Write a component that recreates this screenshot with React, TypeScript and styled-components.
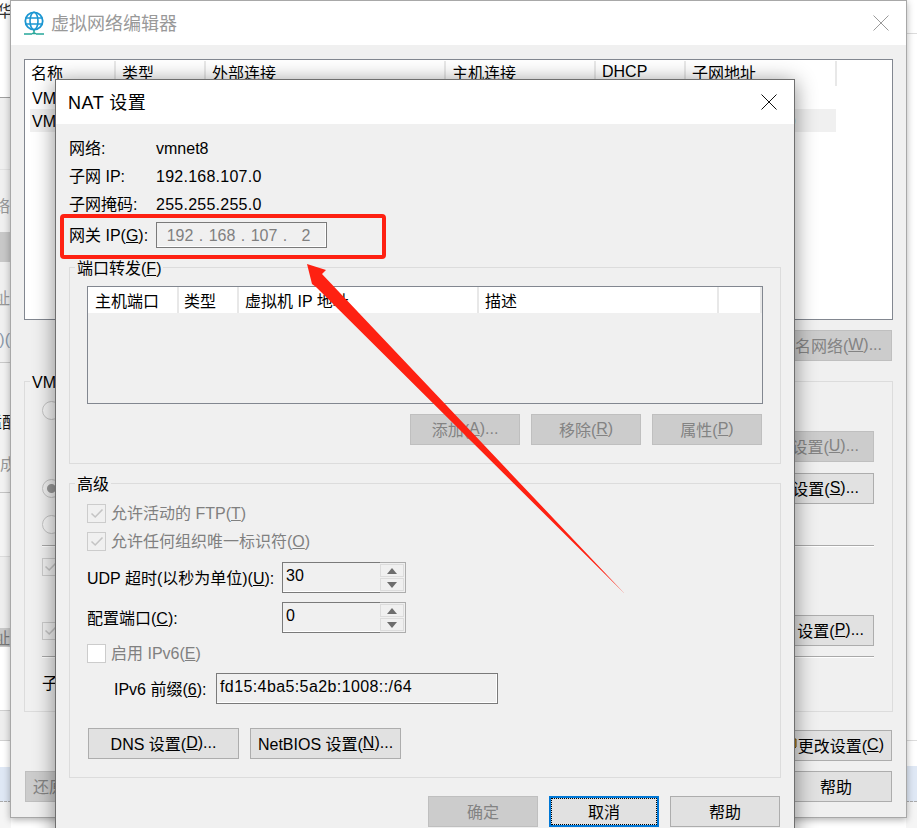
import React from "react";
import styled, { createGlobalStyle } from "styled-components";

const GlobalStyle = createGlobalStyle`
  html, body {
    margin: 0;
    height: 100%;
    overflow: hidden;
    background: #fff;
  }
  * { box-sizing: border-box; }
  body {
    font-family: "Liberation Sans", "Noto Sans CJK SC", sans-serif;
    font-size: 16px;
    color: #000;
  }
`;

const Desktop = styled.div`
  position: relative;
  width: 917px;
  height: 828px;
  overflow: hidden;
  display: flex;
  justify-content: space-between;
`;

const Strip = styled.div`
  width: 11px;
  display: flex;
  flex-direction: column;
  overflow: hidden;
`;

const Band = styled.div<{ $h: number; $bg?: string; $line?: string; $color?: string; $dash?: boolean }>`
  height: ${(p) => p.$h}px;
  flex: none;
  display: flex;
  justify-content: flex-end;
  align-items: center;
  overflow: hidden;
  white-space: nowrap;
  padding-right: 1px;
  background: ${(p) => p.$bg || "#fff"};
  color: ${(p) => p.$color || "#999"};
  border-bottom: 1px ${(p) => (p.$dash ? "dashed" : "solid")} ${(p) => p.$line || "transparent"};
`;

const BandText = styled.span<{ $clip?: number }>`
  flex: none;
  margin-right: -${(p) => p.$clip ?? 0}px;
`;

const BackWindow = styled.section`
  position: absolute;
  left: 10px;
  top: 0;
  width: 897px;
  height: 818px;
  border: 1px solid #a8a8a8;
  background: #f0f0f0;
  box-shadow: 0 2px 7px rgba(0, 0, 0, 0.3);
  display: flex;
  flex-direction: column;
`;

const TitleBar = styled.header<{ $h: number; $pl: number }>`
  height: ${(p) => p.$h}px;
  flex: none;
  background: #fff;
  display: flex;
  align-items: center;
  gap: 7px;
  padding: 0 17px 0 ${(p) => p.$pl}px;
`;

const TitleText = styled.h1<{ $muted?: boolean }>`
  margin: 0;
  flex: 1;
  padding-bottom: 2px;
  font-size: 18px;
  font-weight: 400;
  letter-spacing: ${(p) => (p.$muted ? "0" : "0.5px")};
  color: ${(p) => (p.$muted ? "#999" : "#000")};
`;

const BackBody = styled.div`
  padding: 14px 13px 0 13px;
`;

const ListBox = styled.div`
  height: 261px;
  border: 1px solid #828790;
  background: #fff;
  padding-top: 1px;
`;

const HeaderRow = styled.div<{ $h: number }>`
  display: flex;
  height: ${(p) => p.$h}px;
  background: #fff;
`;

const HeaderCell = styled.div<{ $w: number; $pl?: number; $pb?: number }>`
  width: ${(p) => p.$w}px;
  flex: none;
  padding: 0 0 ${(p) => p.$pb ?? 0}px ${(p) => p.$pl ?? 6}px;
  border-right: 2px solid #e8e8e8;
  white-space: nowrap;
  overflow: hidden;
  display: flex;
  align-items: center;
`;

const ListRows = styled.div`
  padding-left: 5px;
  width: 811px;
`;

const ListRow = styled.div<{ $selected?: boolean }>`
  display: flex;
  height: 23px;
  padding-top: 3px;
  align-items: center;
  background: ${(p) => (p.$selected ? "#f0f0f0" : "transparent")};
`;

const ListCell = styled.span<{ $w: number }>`
  width: ${(p) => p.$w}px;
  flex: none;
  padding-left: 2px;
  white-space: nowrap;
`;

const ActionRow = styled.div<{ $mt: number; $end?: boolean }>`
  display: flex;
  justify-content: ${(p) => (p.$end ? "flex-end" : "space-between")};
  align-items: center;
  margin: ${(p) => p.$mt}px 1px 0;
`;

const Group = styled.fieldset<{ $pad: string; $h: number; $mt: number }>`
  margin: ${(p) => p.$mt}px 0 0;
  min-width: 0;
  height: ${(p) => p.$h}px;
  padding: ${(p) => p.$pad};
  border: 1px solid #dcdcdc;
  legend {
    position: relative;
    top: 2px;
    margin-left: -12px;
    padding: 0 2px;
    line-height: 20px;
    font-size: 16px;
  }
`;

const PanelRow = styled.div<{ $h: number; $mt?: number }>`
  height: ${(p) => p.$h}px;
  margin-top: ${(p) => p.$mt ?? 0}px;
  display: flex;
  align-items: center;
  justify-content: space-between;
  white-space: nowrap;
`;

const Radio = styled.span<{ $on?: boolean }>`
  width: 19px;
  height: 19px;
  flex: none;
  border-radius: 50%;
  border: 1px solid #c4c4c4;
  background: ${(p) => (p.$on ? "radial-gradient(circle, #9a9a9a 0 4px, #f0f0f0 5px)" : "#f4f4f4")};
`;

const Divider = styled.div<{ $mt: number }>`
  height: 1px;
  margin-top: ${(p) => p.$mt}px;
  background: #a9a9a9;
  box-shadow: 0 1px 0 #fff;
`;

const Button = styled.button<{ $w: number; $off?: boolean; $focus?: boolean; $pr?: number; $pl?: number }>`
  width: ${(p) => p.$w}px;
  height: 31px;
  flex: none;
  padding: 0 ${(p) => p.$pr ?? 0}px 2px ${(p) => p.$pl ?? 0}px;
  font: inherit;
  white-space: nowrap;
  overflow: hidden;
  display: flex;
  align-items: center;
  justify-content: ${(p) => (p.$pr ? "flex-end" : p.$pl ? "flex-start" : "center")};
  background: ${(p) => (p.$off ? "#cccccc" : "#e1e1e1")};
  color: ${(p) => (p.$off ? "#838383" : "#000")};
  border: ${(p) => (p.$focus ? "2px solid #0078d7" : `1px solid ${p.$off ? "#bfbfbf" : "#adadad"}`)};
  outline: ${(p) => (p.$focus ? "1px dotted #000" : "none")};
  outline-offset: -3px;
`;

const ShieldMark = styled.svg`
  flex: none;
  margin-right: 1px;
`;

const Dialog = styled.section`
  position: absolute;
  left: 55px;
  top: 79px;
  width: 740px;
  height: 770px;
  border: 1px solid #6f6f6f;
  background: #f0f0f0;
  box-shadow: 0 3px 20px rgba(0, 0, 0, 0.45);
`;

const DialogBody = styled.div`
  padding: 10px 13px 0 13px;
`;

const InfoRow = styled.div`
  display: grid;
  grid-template-columns: 87px 1fr;
  align-items: baseline;
  height: 28px;
  line-height: 30px;
`;

const GatewayRow = styled.div`
  display: grid;
  grid-template-columns: 87px 1fr;
  align-items: center;
  height: 26px;
  margin-top: 4px;
  > span {
    padding-bottom: 2px;
  }
`;

const InfoValue = styled.span<{ $spaced?: boolean }>`
  letter-spacing: ${(p) => (p.$spaced ? "0.25px" : "0")};
`;

const IpField = styled.div`
  width: 171px;
  height: 26px;
  display: flex;
  align-items: center;
  padding: 1px 0 0 6px;
  border: 1px solid #7a7a7a;
  box-shadow: inset -1px -1px 0 #fff;
  color: #808080;
`;

const Octet = styled.span`
  width: 34px;
  text-align: center;
`;

const Dot = styled.span`
  width: 8px;
  text-align: center;
`;

const PortTable = styled.div`
  height: 118px;
  border: 1px solid #828790;
`;

const TableActions = styled.div`
  display: flex;
  justify-content: flex-end;
  gap: 11px;
  margin: 10px 1px 0 0;
`;

const CheckRow = styled.label<{ $mt?: number }>`
  display: flex;
  align-items: center;
  gap: 5px;
  height: 28px;
  margin-top: ${(p) => p.$mt ?? 0}px;
  color: #808080;
  > span:last-child {
    padding-bottom: 2px;
  }
`;

const CheckBox = styled.span<{ $on?: boolean; $small?: boolean }>`
  width: ${(p) => (p.$small ? 18 : 19)}px;
  height: ${(p) => (p.$small ? 18 : 19)}px;
  flex: none;
  display: flex;
  align-items: center;
  justify-content: center;
  border: 1px solid #cccccc;
  background: ${(p) => (p.$on ? "#f0f0f0" : "#fff")};
`;

const FormRow = styled.div<{ $mt: number; $labelW: number; $ml?: number }>`
  display: grid;
  grid-template-columns: ${(p) => p.$labelW}px auto;
  justify-content: start;
  align-items: center;
  height: 31px;
  margin: ${(p) => p.$mt}px 0 0 ${(p) => p.$ml ?? 0}px;
  > span {
    padding-bottom: 2px;
  }
`;

const Spin = styled.div`
  width: 124px;
  height: 31px;
  display: flex;
`;

const SpinField = styled.div`
  flex: 1;
  padding: 2px 0 0 3px;
  line-height: 22px;
  border: 1px solid #7a7a7a;
  border-right: none;
  box-shadow: inset 0 -1px 0 #fff;
`;

const SpinButtons = styled.div`
  width: 26px;
  display: flex;
  flex-direction: column;
  gap: 1px;
  padding: 1px 1px 1px 0;
  border: 1px solid #adadad;
  border-left: none;
`;

const SpinButton = styled.div`
  flex: 1;
  display: flex;
  align-items: center;
  justify-content: center;
  border: 1px solid #dcdcdc;
`;

const TextInput = styled.div`
  width: 282px;
  height: 31px;
  padding: 2px 0 0 3px;
  line-height: 22px;
  letter-spacing: 0.4px;
  border: 1px solid #7a7a7a;
  box-shadow: inset -1px -1px 0 #fff;
`;

const ButtonRow = styled.div<{ $mt: number; $ml: number; $mr?: number; $gap: number; $end?: boolean }>`
  display: flex;
  gap: ${(p) => p.$gap}px;
  justify-content: ${(p) => (p.$end ? "flex-end" : "flex-start")};
  margin: ${(p) => p.$mt}px ${(p) => p.$mr ?? 0}px 0 ${(p) => p.$ml}px;
`;

const RedFrame = styled.div`
  position: absolute;
  left: 60px;
  top: 214px;
  width: 326px;
  height: 45px;
  border: 4px solid #fe2112;
  border-radius: 4px;
`;

const ArrowLayer = styled.svg`
  position: absolute;
  left: 0;
  top: 0;
  pointer-events: none;
`;

const Tick = () => (
  <svg width="14" height="11" viewBox="0 0 14 11" fill="none">
    <path d="M1.5 5.5 L5.2 9 L12.5 1.5" stroke="#c4c4c4" strokeWidth="1.6" />
  </svg>
);

const Globe = () => (
  <svg width="20" height="24" viewBox="0 0 20 24" fill="none">
    <circle cx="10" cy="10" r="8.7" stroke="#1b96d2" strokeWidth="1.8" />
    <ellipse cx="10" cy="10" rx="4" ry="8.7" stroke="#1b96d2" strokeWidth="1.6" />
    <path d="M1.5 7 H18.5 M1.5 13 H18.5" stroke="#1b96d2" strokeWidth="1.6" />
    <path d="M10 19 V22" stroke="#26a69a" strokeWidth="1.6" />
    <path d="M0 23 H8 M12 23 H20 M8 22.5 H12" stroke="#26a69a" strokeWidth="1.4" />
  </svg>
);

const CloseIcon = ({ color }: { color: string }) => (
  <svg width="16" height="16" viewBox="0 0 16 16" fill="none">
    <path d="M0.5 0.5 L15.5 15.5 M15.5 0.5 L0.5 15.5" stroke={color} strokeWidth="1" />
  </svg>
);

const SpinArrow = ({ down }: { down?: boolean }) => (
  <svg width="10" height="6" viewBox="0 0 10 6">
    <path d={down ? "M0 0 H10 L5 6 Z" : "M0 6 H10 L5 0 Z"} fill="#6d6d6d" />
  </svg>
);

const SpinBox = ({ value }: { value: string }) => (
  <Spin>
    <SpinField>{value}</SpinField>
    <SpinButtons>
      <SpinButton>
        <SpinArrow />
      </SpinButton>
      <SpinButton>
        <SpinArrow down />
      </SpinButton>
    </SpinButtons>
  </Spin>
);

const leftBands = [
  { h: 20, color: "#333", text: "华", clip: 3 },
  { h: 78, line: "#a0a0a0" },
  { h: 72, bg: "#f0f0f0", line: "#e2e2e2" },
  { h: 25, bg: "#f0f0f0" },
  { h: 20, bg: "#f0f0f0", text: "网络" },
  { h: 17, bg: "#f0f0f0" },
  { h: 30, bg: "#c8c8c8" },
  { h: 25, bg: "#f0f0f0" },
  { h: 20, bg: "#f0f0f0", text: "地址" },
  { h: 23, bg: "#f0f0f0" },
  { h: 20, bg: "#f0f0f0", color: "#8a97a8", text: "0)(" },
  { h: 13, bg: "#f0f0f0", line: "#c8c8c8" },
  { h: 48, bg: "#f2f2f2" },
  { h: 20, bg: "#f2f2f2", color: "#111", text: "适配", clip: 8 },
  { h: 22, bg: "#f2f2f2" },
  { h: 20, bg: "#f2f2f2", text: "合成", clip: 6 },
  { h: 20, bg: "#f2f2f2", line: "#c4c4c4" },
  { h: 64, bg: "#f4f4f4", line: "#dcdcdc" },
  { h: 71, bg: "#eeeeee" },
  { h: 19, bg: "#c8c8c8", color: "#777", text: "地址" },
  { h: 64, line: "#d0d0d0" },
  { h: 30, bg: "#eeeeee", line: "#d0d0d0" },
  { h: 26 },
  { h: 35, bg: "#dfe8f5", line: "#aaa", dash: true },
  { h: 27, bg: "#f5f5f5" },
];

const rightBands = [
  { h: 34, line: "#dcdcdc" },
  { h: 707, line: "#dcdcdc" },
  { h: 25 },
  { h: 36, bg: "#dfe8f5", line: "#aaa", dash: true },
  { h: 26, bg: "#f5f5f5" },
];

const hostColumns = [
  { w: 91, label: "名称" },
  { w: 90, label: "类型" },
  { w: 240, label: "外部连接" },
  { w: 150, label: "主机连接" },
  { w: 90, label: "DHCP" },
  { w: 151, label: "子网地址" },
];

const portColumns = [
  { w: 91, pl: 7, label: "主机端口" },
  { w: 60, pl: 5, label: "类型" },
  { w: 240, pl: 6, label: "虚拟机 IP 地址" },
  { w: 240, pl: 6, label: "描述" },
  { w: 43, pl: 6, label: "" },
];

const networks = [
  ["VMnet1", "仅主机...", "-", "已连接", "已启用", "192.168.92.0"],
  ["VMnet8", "NAT 模式", "NAT 模式", "已连接", "已启用", "192.168.107.0"],
];

export default function App() {
  return (
    <Desktop>
      <GlobalStyle />
      <Strip>
        {leftBands.map((b, i) => (
          <Band key={i} $h={b.h} $bg={b.bg} $line={b.line} $color={b.color} $dash={b.dash}>
            {b.text && <BandText $clip={b.clip}>{b.text}</BandText>}
          </Band>
        ))}
      </Strip>
      <Strip>
        {rightBands.map((b, i) => (
          <Band key={i} $h={b.h} $bg={b.bg} $line={b.line} $dash={b.dash} />
        ))}
      </Strip>

      <BackWindow>
        <TitleBar $h={44} $pl={13}>
          <Globe />
          <TitleText $muted>虚拟网络编辑器</TitleText>
          <CloseIcon color="#9a9a9a" />
        </TitleBar>
        <BackBody>
          <ListBox>
            <HeaderRow $h={25}>
              {hostColumns.map((c) => (
                <HeaderCell key={c.label} $w={c.w} $pb={4}>
                  {c.label}
                </HeaderCell>
              ))}
            </HeaderRow>
            <ListRows>
              {networks.map((n, i) => (
                <ListRow key={n[0]} $selected={i === 1}>
                  {n.map((cell, j) => (
                    <ListCell key={j} $w={hostColumns[j].w}>
                      {cell}
                    </ListCell>
                  ))}
                </ListRow>
              ))}
            </ListRows>
          </ListBox>
          <ActionRow $mt={10} $end>
            <Button $w={180} $off $pr={9}>
              重命名网络(<u>W</u>)...
            </Button>
          </ActionRow>
          <Group $h={341} $mt={10} $pad="0 18px 0 17px">
            <legend>VMnet 信息</legend>
            <PanelRow $h={20} $mt={9}>
              <Radio />
            </PanelRow>
            <PanelRow $h={31} $mt={11}>
              <span />
              <Button $w={170} $off $pr={14}>
                DHCP 设置(<u>U</u>)...
              </Button>
            </PanelRow>
            <PanelRow $h={31} $mt={11}>
              <Radio $on />
              <Button $w={170} $pr={14}>
                NAT 设置(<u>S</u>)...
              </Button>
            </PanelRow>
            <PanelRow $h={20} $mt={10}>
              <Radio />
            </PanelRow>
            <Divider $mt={11} />
            <PanelRow $h={19} $mt={11}>
              <CheckBox $on $small>
                <Tick />
              </CheckBox>
            </PanelRow>
            <PanelRow $h={31} $mt={39}>
              <CheckBox $on $small>
                <Tick />
              </CheckBox>
              <Button $w={170} $pr={9}>
                DHCP 设置(<u>P</u>)...
              </Button>
            </PanelRow>
            <Divider $mt={10} />
            <PanelRow $h={22} $mt={14}>
              <span>子网 IP</span>
            </PanelRow>
          </Group>
          <ActionRow $mt={18} $end>
            <Button $w={180} $pr={7}>
              <ShieldMark width="10" height="14" viewBox="0 0 10 14">
                <path d="M0 1 H9 V9 L5 13 L0 9 Z" fill="#e3a21a" stroke="#6b4a10" strokeWidth="1" />
              </ShieldMark>
              更改设置(<u>C</u>)
            </Button>
          </ActionRow>
          <ActionRow $mt={10}>
            <Button $w={150} $off $pl={7}>
              还原默认设置(<u>R</u>)
            </Button>
            <Button $w={112}>帮助</Button>
          </ActionRow>
        </BackBody>
      </BackWindow>

      <Dialog>
        <TitleBar $h={44} $pl={12}>
          <TitleText>NAT 设置</TitleText>
          <CloseIcon color="#111" />
        </TitleBar>
        <DialogBody>
          <InfoRow>
            <span>网络:</span>
            <InfoValue>vmnet8</InfoValue>
          </InfoRow>
          <InfoRow>
            <span>子网 IP:</span>
            <InfoValue $spaced>192.168.107.0</InfoValue>
          </InfoRow>
          <InfoRow>
            <span>子网掩码:</span>
            <InfoValue $spaced>255.255.255.0</InfoValue>
          </InfoRow>
          <GatewayRow>
            <span>
              网关 IP(<u>G</u>):
            </span>
            <IpField>
              <Octet>192</Octet>
              <Dot>.</Dot>
              <Octet>168</Octet>
              <Dot>.</Dot>
              <Octet>107</Octet>
              <Dot>.</Dot>
              <Octet>2</Octet>
            </IpField>
          </GatewayRow>

          <Group $h={207} $mt={9} $pad="9px 17px 0">
            <legend>
              端口转发(<u>F</u>)
            </legend>
            <PortTable>
              <HeaderRow $h={26}>
                {portColumns.map((c, i) => (
                  <HeaderCell key={i} $w={c.w} $pl={c.pl}>
                    {c.label}
                  </HeaderCell>
                ))}
              </HeaderRow>
            </PortTable>
            <TableActions>
              <Button $w={110} $off>
                添加(<u>A</u>)...
              </Button>
              <Button $w={110} $off>
                移除(<u>R</u>)
              </Button>
              <Button $w={110} $off>
                属性(<u>P</u>)
              </Button>
            </TableActions>
          </Group>

          <Group $h={305} $mt={9} $pad="6px 17px 0">
            <legend>高级</legend>
            <CheckRow>
              <CheckBox $on>
                <Tick />
              </CheckBox>
              <span>
                允许活动的 FTP(<u>T</u>)
              </span>
            </CheckRow>
            <CheckRow>
              <CheckBox $on>
                <Tick />
              </CheckBox>
              <span>
                允许任何组织唯一标识符(<u>O</u>)
              </span>
            </CheckRow>
            <FormRow $mt={7} $labelW={195}>
              <span>
                UDP 超时(以秒为单位)(<u>U</u>):
              </span>
              <SpinBox value="30" />
            </FormRow>
            <FormRow $mt={9} $labelW={195}>
              <span>
                配置端口(<u>C</u>):
              </span>
              <SpinBox value="0" />
            </FormRow>
            <CheckRow $mt={6}>
              <CheckBox />
              <span>
                启用 IPv6(<u>E</u>)
              </span>
            </CheckRow>
            <FormRow $mt={6} $labelW={102} $ml={27}>
              <span>
                IPv6 前缀(<u>6</u>):
              </span>
              <TextInput>fd15:4ba5:5a2b:1008::/64</TextInput>
            </FormRow>
            <ButtonRow $mt={24} $ml={1} $gap={11}>
              <Button $w={151}>
                DNS 设置(<u>D</u>)...
              </Button>
              <Button $w={151}>
                NetBIOS 设置(<u>N</u>)...
              </Button>
            </ButtonRow>
          </Group>

          <ButtonRow $mt={18} $ml={0} $mr={1} $gap={11} $end>
            <Button $w={110} $off>
              确定
            </Button>
            <Button $w={110} $focus>
              取消
            </Button>
            <Button $w={110}>帮助</Button>
          </ButtonRow>
        </DialogBody>
      </Dialog>

      <RedFrame />
      <ArrowLayer width="917" height="828" viewBox="0 0 917 828">
        <polygon points="307,264 326,270 322,274 625,594 316,287 312,284" fill="#fe2112" />
      </ArrowLayer>
    </Desktop>
  );
}
